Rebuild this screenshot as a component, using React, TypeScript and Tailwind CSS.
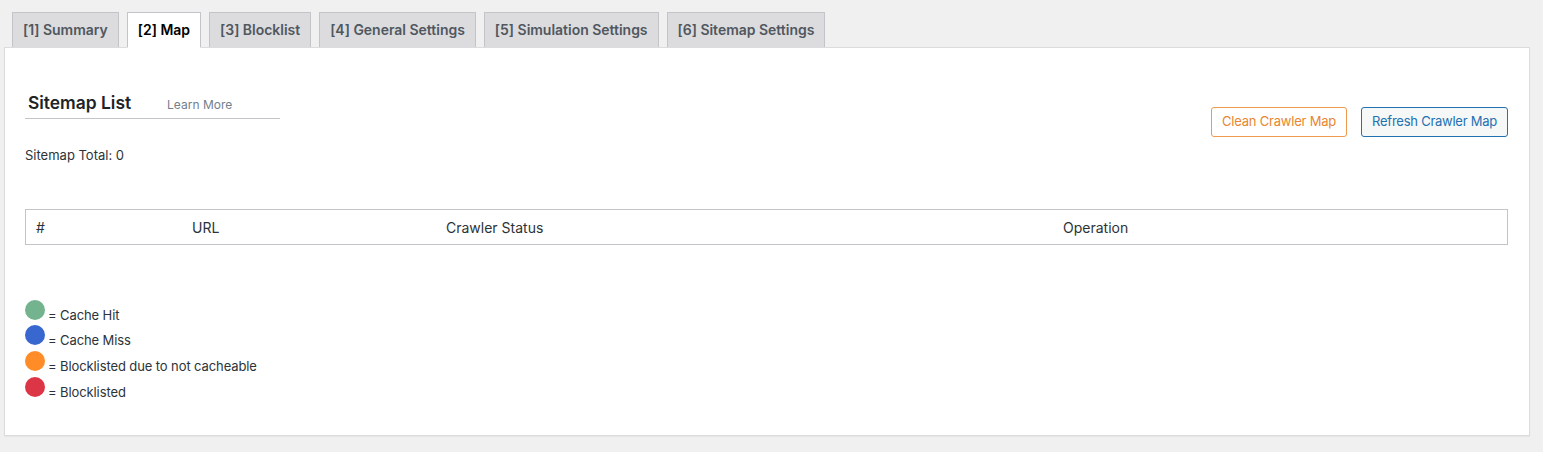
import React from "react";

const tabs = [
  "[1] Summary",
  "[2] Map",
  "[3] Blocklist",
  "[4] General Settings",
  "[5] Simulation Settings",
  "[6] Sitemap Settings",
];

const legend = [
  { color: "bg-[#73b38d]", label: "= Cache Hit" },
  { color: "bg-[#3767cf]", label: "= Cache Miss" },
  { color: "bg-[#ff8c27]", label: "= Blocklisted due to not cacheable" },
  { color: "bg-[#dc3545]", label: "= Blocklisted" },
];

export default function App() {
  const active = 1;
  return (
    <div className="min-h-[452px] bg-[#f0f0f1] pt-[12px] pr-[13px] pl-[4px] text-[#2c3338] [font-family:Inter,'Noto_Sans',sans-serif]">
      {/* tab strip */}
      <div className="flex gap-[8px] pl-[8px]">
        {tabs.map((t, i) => (
          <div
            key={t}
            className={
              i === active
                ? "relative z-10 -mb-px h-[36px] border border-b-white border-[#c3c4c7] bg-white px-[10px] text-[14px] leading-[34px] font-semibold tracking-[-0.02px] text-black"
                : "h-[35px] border border-b-0 border-[#c3c4c7] bg-[#dcdcde] px-[10px] text-[14px] leading-[34px] font-semibold tracking-[-0.02px] text-[#50575e]"
            }
          >
            {t}
          </div>
        ))}
      </div>

      {/* panel */}
      <div className="border border-[#dcdcde] bg-white pr-[21px] pb-[34px] pl-[20px] shadow-[0_1px_1px_rgba(0,0,0,0.04)]">
        <div className="mt-[42px] flex items-start justify-between">
          <div className="flex w-[255px] items-baseline border-b border-[#c3c4c7] pb-[2px]">
            <span className="pl-[3px] text-[17.4px] leading-[26px] font-semibold text-[#1d2327]">
              Sitemap List
            </span>
            <span className="ml-[36px] text-[12px] text-[#72808e]">Learn More</span>
          </div>
          <div className="mt-[17px] flex gap-[14px]">
            <button className="h-[30px] rounded-[3px] border border-[#ef9a4c] bg-white px-[10px] text-[13px] tracking-[-0.2px] text-[#e8862f]">
              Clean Crawler Map
            </button>
            <button className="h-[30px] rounded-[3px] border border-[#2271b1] bg-[#f6f7f7] px-[10px] text-[13px] tracking-[-0.25px] text-[#2271b1]">
              Refresh Crawler Map
            </button>
          </div>
        </div>

        <p className="mt-[9px] text-[13px] leading-[18px] text-[#2c3338]">Sitemap Total: 0</p>

        <div className="mt-[45px] flex h-[36px] items-center border border-[#c3c4c7] text-[14px] text-[#2c3338]">
          <div className="w-[156px] pl-[10px]">#</div>
          <div className="w-[254px] pl-[10px]">URL</div>
          <div className="w-[617px] pl-[10px]">Crawler Status</div>
          <div className="pl-[10px]">Operation</div>
        </div>

        <div className="mt-[53px]">
          {legend.map((l) => (
            <div key={l.label} className="flex h-[25.7px] items-end">
              <span className={`mb-[4px] h-[20px] w-[20px] rounded-full ${l.color}`} />
              <span className="ml-[3px] text-[13px] leading-[18px] tracking-[-0.1px] text-[#2c3338]">{l.label}</span>
            </div>
          ))}
        </div>
      </div>
    </div>
  );
}
